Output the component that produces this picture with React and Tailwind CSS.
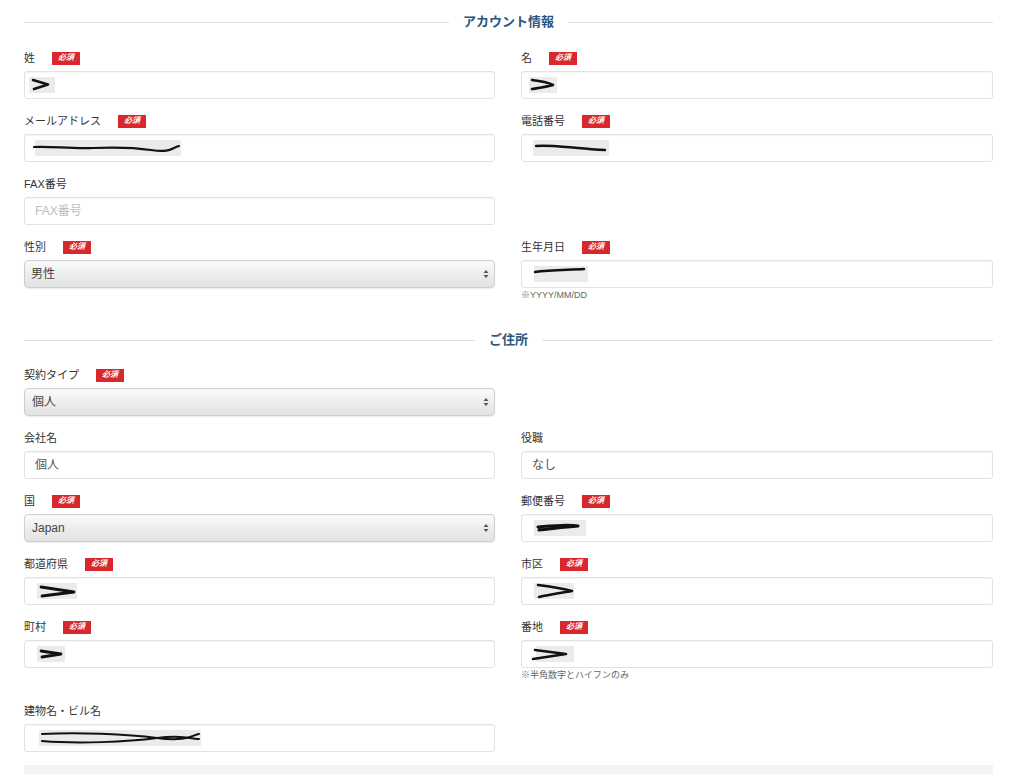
import React from "react";

function Badge() {
  return (
    <span className="ml-[17px] inline-flex h-[13px] w-[28px] items-center justify-center bg-[#d8272d] text-[8px] font-bold italic leading-none text-white">
      必須
    </span>
  );
}

function Scribble({ w, pad, paths, sw = 2.4, smudge }) {
  return (
    <svg width={w} height="20" viewBox={`0 0 ${w} 20`} style={{ marginLeft: pad }} className="shrink-0">
      {smudge && <rect x={smudge[0]} y="2" width={smudge[1]} height="16" fill="#e4e4e4" opacity="0.75" />}
      {paths.map((d, i) => (
        <path key={i} d={d} fill="none" stroke="#111" strokeWidth={sw} strokeLinecap="round" strokeLinejoin="round" />
      ))}
    </svg>
  );
}

function Field({ label, req, children, hint, kind = "input" }) {
  return (
    <div className="flex flex-col">
      <div className="flex h-[14px] items-center text-[11px] leading-[14px] text-[#333]">
        <span>{label}</span>
        {req && <Badge />}
      </div>
      {kind === "select" ? (
        <div className="mt-[6px] flex h-[28px] items-center justify-between rounded-[4px] border border-[#cfcfcf] bg-gradient-to-b from-[#fbfbfb] via-[#ededed] to-[#e3e3e3] pl-[6px] pr-[5px] text-[12px] text-[#444] shadow-[0_1px_1px_rgba(0,0,0,0.08)]">
          <span>{children}</span>
          <svg width="6" height="10" viewBox="0 0 6 10">
            <path d="M0.5 4 L3 1 L5.5 4 Z" fill="#555" />
            <path d="M0.5 6 L3 9 L5.5 6 Z" fill="#555" />
          </svg>
        </div>
      ) : (
        <div className="mt-[6px] flex h-[28px] items-center rounded-[3px] border border-[#e2e2e2] bg-white text-[12px] text-[#555] shadow-[inset_0_1px_1px_rgba(0,0,0,0.04)]">
          {children}
        </div>
      )}
      {hint && <div className="mt-[1px] mb-[8px] h-[12px] text-[9px] leading-[12px] text-[#666]">{hint}</div>}
    </div>
  );
}

function Header({ title }) {
  return (
    <div className="flex h-[16px] items-center">
      <div className="h-px flex-1 bg-[#e0e0e0]" />
      <div className="px-[14px] text-[13px] font-bold leading-[16px] text-[#2a5680]">{title}</div>
      <div className="h-px flex-1 bg-[#e0e0e0]" />
    </div>
  );
}

function Row({ children }) {
  return <div className="grid grid-cols-[471px_472px] gap-x-[26px]">{children}</div>;
}

export default function App() {
  return (
    <div className="min-h-[774px] w-[1024px] bg-white font-['Liberation_Sans','Noto_Sans_CJK_JP',sans-serif]">
      <div className="ml-[24px] w-[969px] pt-[14px]">
        <Header title="アカウント情報" />
        <div className="mt-[21px] flex flex-col gap-[15px]">
          <Row>
            <Field label="姓" req>
              <Scribble w={32} pad={4} smudge={[0, 26]} paths={["M4 5 L19 9.5 L5 14"]} sw={2.6} />
            </Field>
            <Field label="名" req>
              <Scribble w={32} pad={7} smudge={[0, 28]} paths={["M3 5 C12 6 20 8 24 10 C17 12 9 13 3 14"]} sw={2.6} />
            </Field>
          </Row>
          <Row>
            <Field label="メールアドレス" req>
              <Scribble
                w={152}
                pad={6}
                smudge={[4, 146]}
                paths={["M3 9 C 20 8, 40 11, 62 10 S 100 9, 120 12 S 140 10, 148 8"]}
                sw={2.2}
              />
            </Field>
            <Field label="電話番号" req>
              <Scribble w={78} pad={11} smudge={[0, 76]} paths={["M3 8 C 18 7, 30 9, 45 10 S 62 12, 72 12"]} sw={2.4} />
            </Field>
          </Row>
          <Row>
            <Field label="FAX番号">
              <span className="pl-[10px] text-[#bdbdbd]">FAX番号</span>
            </Field>
            <div />
          </Row>
          <Row>
            <Field label="性別" req kind="select">
              男性
            </Field>
            <Field label="生年月日" req hint="※YYYY/MM/DD">
              <Scribble w={60} pad={10} smudge={[2, 54]} paths={["M3 8 C 18 6, 36 6, 52 5"]} sw={2.4} />
            </Field>
          </Row>
        </div>

        <div className="mt-[23px]">
          <Header title="ご住所" />
        </div>
        <div className="mt-[20px] flex flex-col gap-[15px]">
          <Row>
            <Field label="契約タイプ" req kind="select">
              <span className="pl-[1px]">個人</span>
            </Field>
            <div />
          </Row>
          <Row>
            <Field label="会社名">
              <span className="pl-[10px]">個人</span>
            </Field>
            <Field label="役職">
              <span className="pl-[10px]">なし</span>
            </Field>
          </Row>
          <Row>
            <Field label="国" req kind="select">
              <span className="pl-[1px]">Japan</span>
            </Field>
            <Field label="郵便番号" req>
              <Scribble w={54} pad={12} smudge={[0, 52]} paths={["M4 9 C 20 7, 38 7, 44 8 C 30 9, 16 11, 5 12"]} sw={3} />
            </Field>
          </Row>
          <Row>
            <Field label="都道府県" req>
              <Scribble w={44} pad={12} smudge={[0, 40]} paths={["M4 6 L37 11 L5 15"]} sw={2.8} />
            </Field>
            <Field label="市区" req>
              <Scribble w={44} pad={12} smudge={[0, 40]} paths={["M4 4 C 20 6, 34 9, 38 10 C 26 12, 13 14, 5 16"]} sw={2.6} />
            </Field>
          </Row>
          <Row>
            <Field label="町村" req>
              <Scribble w={30} pad={12} smudge={[0, 28]} paths={["M4 7 L24 10 L5 13"]} sw={2.8} />
            </Field>
            <Field label="番地" req hint="※半角数字とハイフンのみ">
              <Scribble w={44} pad={8} smudge={[6, 38]} paths={["M5 6 L36 10 L3 15"]} sw={2.6} />
            </Field>
          </Row>
          <Row>
            <Field label="建物名・ビル名">
              <Scribble
                w={168}
                pad={12}
                smudge={[2, 162]}
                paths={[
                  "M5 6 C 40 4, 90 6, 120 10 S 155 7, 162 6",
                  "M5 13 C 40 16, 90 14, 120 10 S 155 12, 162 11",
                ]}
                sw={2}
              />
            </Field>
            <div />
          </Row>
        </div>
        <div className="mt-[13px] h-[10px] bg-[#f4f4f4]" />
      </div>
    </div>
  );
}
